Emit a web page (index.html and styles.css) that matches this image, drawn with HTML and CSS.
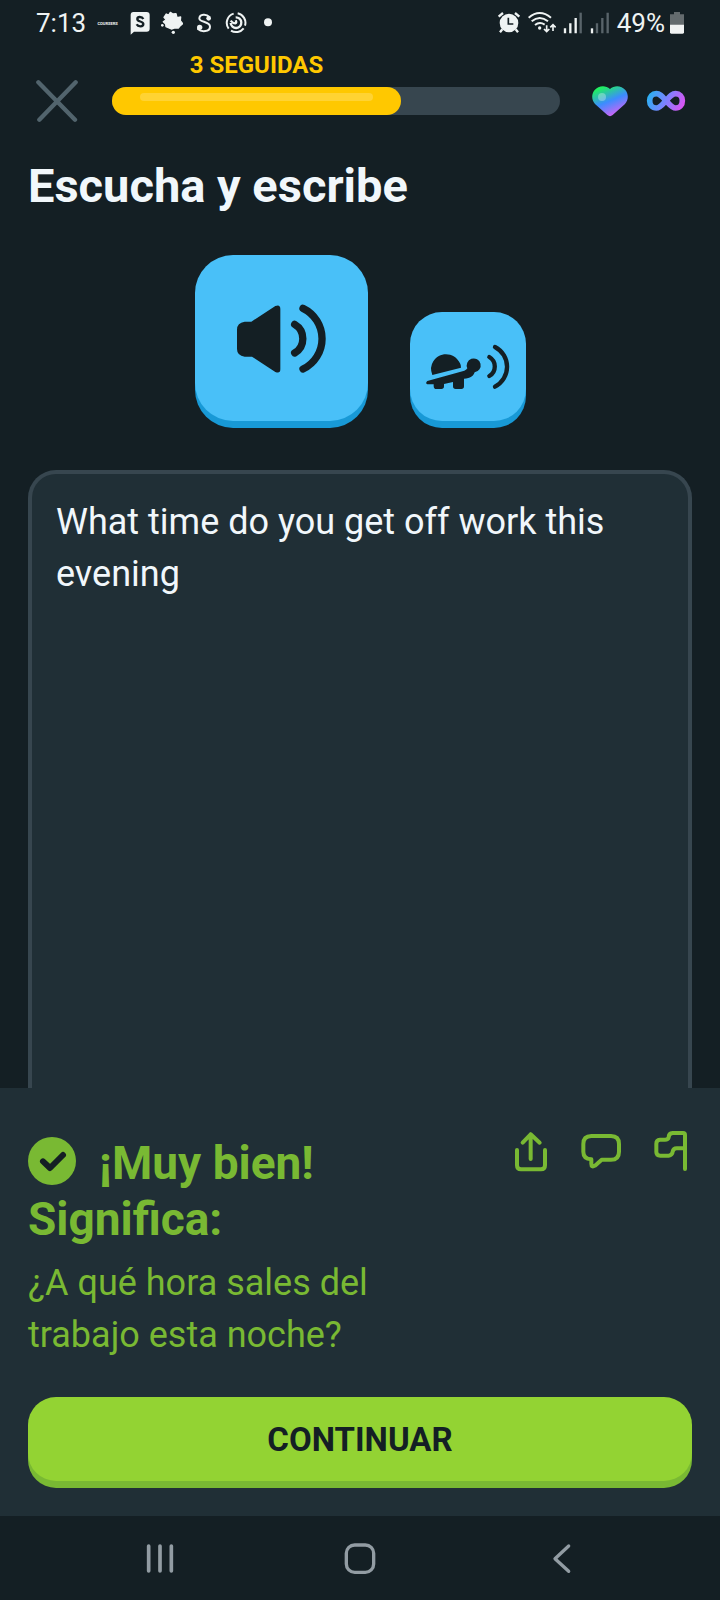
FILE: index.html
```html
<!DOCTYPE html>
<html lang="es">
<head>
<meta charset="utf-8">
<meta name="viewport" content="width=device-width, initial-scale=1">
<title>Escucha y escribe</title>
<link rel="stylesheet" href="styles.css">
</head>
<body>
<div class="status">
  <div class="status-left">
    <span class="clock">7:13</span>
    <span class="tiny-word">COURSERS</span>
    <svg class="status-icon" viewBox="388 33 66 72" aria-hidden="true"><path fill="#eff3f3" d="M401 36H441Q450 36 450 45V86Q450 95 441 95H403L393 104V45Q393 36 401 36Z"/><path fill="none" stroke="#141f24" stroke-width="7" d="M431 57C427 49 413 49 413 57C413 67 431 62 431 72C431 81 415 81 411 73"/></svg>
    <svg class="status-icon" viewBox="483 33 66 72" aria-hidden="true"><path fill="#eff3f3" stroke="#eff3f3" stroke-width="4" stroke-linejoin="round" d="M499 42L506 45L511 37L519 42L528 41L531 53L542 51L541 62L548 71L541 77L535 84L523 84L514 87L505 83L498 80L497 72L490 65L498 59L492 52Z"/><circle cx="487" cy="76" r="4" fill="#eff3f3"/><circle cx="520" cy="97" r="5" fill="#eff3f3"/></svg>
    <svg class="status-icon" viewBox="579 33 66 72" aria-hidden="true"><path fill="none" stroke="#eff3f3" stroke-width="6" stroke-linecap="round" d="M628 51C619 41 599 42 598 55C597 67 630 64 630 80C630 96 604 97 594 87"/><circle cx="626" cy="55" r="7" fill="#eff3f3"/><circle cx="599" cy="82" r="8" fill="#eff3f3"/></svg>
    <svg class="status-icon" viewBox="675 33 66 72" aria-hidden="true"><g fill="none" stroke="#eff3f3" stroke-width="6"><path d="M701 41A29 29 0 0 0 686 86M693 92A29 29 0 0 0 731 85M735 77A29 29 0 0 0 713 40"/><path stroke-width="7" d="M707 52A16 16 0 1 1 692 69M692 62Q698 70 706 70Q711 69 707 61"/></g></svg>
    <svg class="status-icon" viewBox="771 33 66 72" aria-hidden="true"><circle cx="804" cy="67" r="12" fill="#eff3f3"/></svg>
  </div>
  <div class="status-right">
    <svg width="24" height="24" viewBox="416 33 72 72" aria-hidden="true"><circle cx="452" cy="69" r="28" fill="#eff3f3"/><path stroke="#eff3f3" stroke-width="7" d="M421 50L434 39M483 50L470 39M432 88L425 97M472 88L479 97"/><path fill="none" stroke="#141f24" stroke-width="5" d="M450 53V72H465"/></svg>
    <svg width="28" height="24" viewBox="510 33 84 72" aria-hidden="true"><g fill="none" stroke="#eff3f3" stroke-width="6"><path d="M512 53Q545 25 579 53M521 64Q545 44 570 64M531 75Q545 64 560 74"/><path stroke-width="5" d="M566 76V94M558 87L566 95L574 87M585 93V75M577 82L585 74L593 82"/></g><circle cx="545" cy="84" r="5" fill="#eff3f3"/></svg>
    <svg width="20" height="24" viewBox="609 33 60 72" aria-hidden="true"><path stroke="#eff3f3" stroke-width="7" d="M615 85V100M631 70V100M647 54V100"/><path stroke="#59646a" stroke-width="7" d="M662 38V100"/></svg>
    <svg width="20" height="24" viewBox="687 33 60 72" aria-hidden="true"><path stroke="#eff3f3" stroke-width="7" d="M693 85V100"/><path stroke="#59646a" stroke-width="7" d="M708 70V100M724 54V100M740 38V100"/></svg>
    <span class="battery"><span>49%</span>
    <svg width="14" height="24" viewBox="930 33 42 72" aria-hidden="true"><path fill="#646b6e" d="M942 36H960V43H972V75H930V43H942Z"/><path fill="#f1f3f3" d="M930 74H972V97Q972 101 968 101H934Q930 101 930 97Z"/></svg></span>
  </div>
</div>

<header class="lesson-header">
  <div class="streak"><span class="streak-label" style="width:64.5%">3 SEGUIDAS</span></div>
  <button class="icon-button close" type="button" aria-label="Cerrar">
    <svg width="42" height="42" viewBox="105 242 126 126"><path fill="none" stroke="#52646d" stroke-width="13" stroke-linecap="round" d="M112 249L222 361M224 249L115 361"/></svg>
  </button>
  <div class="track" role="progressbar" aria-label="Progreso" aria-valuenow="64" aria-valuemin="0" aria-valuemax="100"><div class="fill" style="width:64.5%"><div class="shine"></div></div></div>
  <div class="lives">
    <svg width="36" height="32" viewBox="698 255 108 96" role="img" aria-label="Vidas">
      <defs><linearGradient id="heart" x1=".1" y1="0" x2=".6" y2="1"><stop offset=".1" stop-color="#20f060"/><stop offset=".55" stop-color="#3c8cff"/><stop offset="1" stop-color="#d662f5"/></linearGradient></defs>
      <path fill="url(#heart)" d="M752 267C738 254 717 257 706 270C696 282 696 300 707 312L744 345Q752 352 760 345L797 312C808 300 808 282 798 270C787 257 766 254 752 267Z"/><circle cx="728" cy="291" r="12" fill="#fff" opacity=".3"/>
    </svg>
    <svg width="40" height="32" viewBox="858 252 120 96" role="img" aria-label="Ilimitadas">
      <defs><linearGradient id="inf" x1="860" y1="270" x2="976" y2="325" gradientUnits="userSpaceOnUse"><stop offset="0" stop-color="#1cb8f0"/><stop offset=".5" stop-color="#7c82ff"/><stop offset="1" stop-color="#ea4cf0"/></linearGradient></defs>
      <path fill="none" stroke="url(#inf)" stroke-width="17" d="M918 299C907 287 900 278 889 278C877 278 869 287 869 299C869 312 877 321 889 321C900 321 907 311 918 299C929 287 936 278 947 278C959 278 967 287 967 299C967 312 959 321 947 321C936 321 929 311 918 299Z"/>
    </svg>
  </div>
</header>

<main class="exercise">
  <h1><label for="answer">Escucha y escribe</label></h1>
  <div class="audio">
    <button class="audio-button large" type="button" aria-label="Escuchar">
      <svg width="91" height="72" viewBox="169 187 273 216"><path fill="#141f24" d="M195 246H215L287 199Q302 193 302 208V389Q302 403 287 397L217 351H195Q172 348 172 328V270Q172 249 195 246Z"/><g fill="none" stroke="#141f24" stroke-width="22" stroke-linecap="round"><path d="M345 254A50 50 0 0 1 345 340"/><path d="M370 206A101 101 0 0 1 370 388"/></g></svg>
    </button>
    <button class="audio-button small" type="button" aria-label="Escuchar despacio">
      <svg width="86" height="48" viewBox="735 309 258 144"><g fill="#141f24"><path d="M757 405Q748 382 760 364C778 333 825 336 840 370Q844 377 843 383Z"/><path d="M742 423L853 392Q860 389 862 385A21 21 0 1 1 884 397C879 409 872 415 852 416V439Q852 447 844 447H827Q819 447 819 439V426L792 432V439Q792 447 784 447H769Q761 447 761 437V433H742Q735 430 742 423Z"/></g><g fill="none" stroke="#141f24" stroke-width="13" stroke-linecap="round"><path d="M928 351A33 33 0 0 1 928 408"/><path d="M945 321A67 67 0 0 1 945 440"/></g></svg>
    </button>
  </div>
  <textarea id="answer" class="answer" spellcheck="false">What time do you get off work this evening</textarea>
</main>

<section class="feedback">
  <div class="feedback-top">
    <div class="feedback-text">
      <h2><svg class="check" viewBox="84 197 144 144" aria-hidden="true"><circle cx="156" cy="269" r="72" fill="#79b933"/><path fill="none" stroke="#141f24" stroke-width="18" stroke-linecap="round" stroke-linejoin="round" d="M129 270L150 290L189 251"/></svg>¡Muy bien! Significa:</h2>
      <p>¿A qué hora sales del trabajo esta noche?</p>
    </div>
    <div class="actions">
      <button class="icon-button" type="button" aria-label="Compartir"><svg width="34" height="42" viewBox="102 180 102 126"><path d="M111 240V286Q111 298 123 298H183Q195 298 195 286V240M152 267V193M128 218L152 193L179 218"/></svg></button>
      <button class="icon-button" type="button" aria-label="Comentar"><svg width="42" height="42" viewBox="300 180 126 126"><path d="M334 268C317 267 310 259 310 245V222Q310 198 334 198H393Q417 198 417 222V245Q417 269 393 269H365L345 287Q334 294 334 281Z"/></svg></button>
      <button class="icon-button" type="button" aria-label="Reportar"><svg width="34" height="42" viewBox="522 180 102 126"><path d="M615 297V195Q615 189 609 189H578Q566 190 566 202Q564 209 555 209H540Q529 210 529 221V246Q529 257 541 257H566Q577 256 578 245Q580 235 590 235H615"/></svg></button>
    </div>
  </div>
  <button class="continue" type="button">CONTINUAR</button>
</section>

<nav class="system-nav" aria-label="Sistema">
  <button class="icon-button" type="button" aria-label="Recientes"><svg width="32" height="32" viewBox="432 487 96 96"><path stroke-width="11" d="M446 499V574M480 499V574M514 499V574"/></svg></button>
  <button class="icon-button" type="button" aria-label="Inicio"><svg width="32" height="32" viewBox="-1 -2 96 96"><rect x="6" y="7" width="82" height="82" rx="25" stroke-width="10"/></svg></button>
  <button class="icon-button" type="button" aria-label="Atrás"><svg width="32" height="32" viewBox="554 487 96 96"><path stroke-width="10" d="M628 499L587 537L628 575"/></svg></button>
</nav>
</body>
</html>
```
FILE: styles.css
```css
* { box-sizing: border-box; }

body {
  margin: 0;
  min-height: 100vh;
  display: flex;
  flex-direction: column;
  background: #141f24;
  color: #f1f7fb;
  font-family: Roboto, "Noto Sans", sans-serif;
}

button { font-family: inherit; cursor: pointer; }
svg { display: block; flex: none; }

.icon-button {
  padding: 0;
  border: 0;
  background: none;
}

.status {
  display: flex;
  justify-content: space-between;
  align-items: center;
  height: 46px;
  padding: 0 36px;
  font-size: 26px;
  color: #eff3f3;
}
.status-left, .status-right, .battery { display: flex; align-items: center; }
.status-left { gap: 10px; }
.status-right { gap: 7px; }
.battery { gap: 5px; }
.tiny-word { width: 23px; font-size: 4px; font-weight: 700; text-align: center; }
.status-icon { width: 22px; height: 24px; }

.lesson-header {
  display: grid;
  grid-template-columns: 44px 1fr auto;
  grid-template-rows: 30px 42px;
  align-items: center;
  column-gap: 32px;
  padding: 4px 34px 0 36px;
}
.streak { grid-column: 2; }
.streak-label {
  display: block;
  text-align: center;
  color: #ffc800;
  font-size: 24px;
  font-weight: 700;
  line-height: 30px;
}
.close { grid-column: 1; justify-self: start; }
.track {
  height: 28px;
  border-radius: 14px;
  background: #37464f;
}
.fill {
  height: 28px;
  padding: 6px 28px;
  border-radius: 14px;
  background: #ffc800;
}
.shine {
  height: 8px;
  border-radius: 4px;
  background: #ffd333;
}
.lives { display: flex; gap: 18px; }

.exercise {
  flex: 1;
  display: flex;
  flex-direction: column;
  padding: 34px 28px 0;
}
h1, h2, p { margin: 0; }
h1 {
  font-size: 47px;
  line-height: 60px;
  font-weight: 700;
}
.audio {
  display: flex;
  justify-content: center;
  align-items: flex-end;
  gap: 42px;
  padding: 39px 0 49px;
}
.audio-button {
  display: flex;
  align-items: center;
  justify-content: center;
  padding: 0;
  border: 0;
  background: #49c0f8;
  box-shadow: 0 7px 0 #1899d6;
}
.large { width: 173px; height: 166px; border-radius: 38px; }
.small { width: 116px; height: 109px; border-radius: 32px; }

.answer {
  flex: 1;
  display: block;
  width: 100%;
  padding: 22px 24px;
  border: 4px solid #37464f;
  border-bottom: 0;
  border-radius: 28px 28px 0 0;
  outline: 0;
  resize: none;
  background: #202f36;
  color: inherit;
  font-family: inherit;
  font-size: 36px;
  line-height: 52px;
}

.feedback {
  padding: 42px 28px 35px;
  background: #202f36;
  color: #79b933;
}
.feedback-top {
  display: flex;
  justify-content: space-between;
  align-items: flex-start;
}
.feedback-text { max-width: 380px; padding-top: 5px; }
h2 {
  font-size: 46px;
  line-height: 56px;
  font-weight: 700;
}
.check {
  display: inline-block;
  width: 48px;
  height: 48px;
  margin-right: 23px;
  vertical-align: -6px;
}
p {
  padding: 10px 0 36px;
  font-size: 36px;
  line-height: 52px;
}
.actions { display: flex; gap: 32px; padding-right: 4px; }
.actions path {
  fill: none;
  stroke: #79b933;
  stroke-width: 12;
  stroke-linecap: round;
  stroke-linejoin: round;
}
.continue {
  display: block;
  width: 100%;
  height: 84px;
  border: 0;
  border-radius: 28px;
  background: #93d333;
  box-shadow: 0 7px 0 #79b933;
  color: #141f24;
  font-size: 33px;
  font-weight: 700;
}

.system-nav {
  display: flex;
  justify-content: space-around;
  align-items: center;
  height: 84px;
  padding: 0 60px;
}
.system-nav svg {
  fill: none;
  stroke: #929ca3;
  stroke-linecap: round;
  stroke-linejoin: round;
}
```
